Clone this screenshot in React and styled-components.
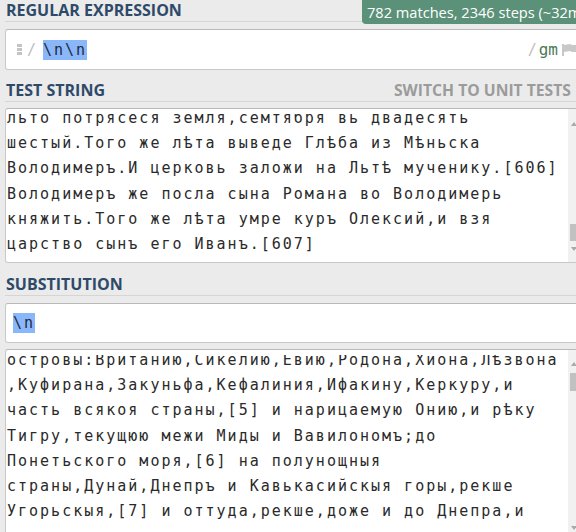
import React from "react";
import styled, { createGlobalStyle } from "styled-components";

const GlobalStyle = createGlobalStyle`
  html, body {
    margin: 0;
    padding: 0;
    background: #ebebeb;
    overflow: hidden;
  }
  body {
    width: 576px;
    height: 532px;
    font-family: "Open Sans", sans-serif;
  }
`;

const Page = styled.div`
  width: 574px;
  padding-left: 5px;
  display: flex;
  flex-direction: column;
`;

const Header = styled.div`
  display: flex;
  align-items: flex-start;
  height: 21px;
  margin-top: ${(p) => p.$gap || 0}px;
  border-bottom: 1px solid #d5d5d5;
`;

const Title = styled.h2`
  margin: 0;
  padding-left: 1px;
  font: 700 16px/21px "Open Sans", sans-serif;
  color: #2e4a69;
  white-space: nowrap;
  flex: ${(p) => (p.$basis ? `0 0 ${p.$basis}px` : "0 0 auto")};
`;

const Badge = styled.div`
  position: relative;
  z-index: 1;
  flex-shrink: 0;
  height: 24px;
  padding: 0 5px;
  background: #5a9178;
  color: #fff;
  font: 400 14.6px/24px "Open Sans", sans-serif;
  border-radius: 0 0 0 4px;
  white-space: nowrap;
`;

const SwitchLink = styled.span`
  margin-left: auto;
  padding-right: 8px;
  font: 700 15.7px/21px "Open Sans", sans-serif;
  color: #9b9b9b;
  white-space: nowrap;
`;

const Box = styled.div`
  box-sizing: border-box;
  display: flex;
  align-items: ${(p) => (p.$center ? "center" : "stretch")};
  height: ${(p) => p.$h}px;
  margin-top: ${(p) => p.$gap}px;
  padding-left: ${(p) => p.$pad || 0}px;
  background: #fff;
  border: 1px solid #c8c8c8;
  border-top-color: #b9b9b9;
  border-radius: 3px;
  overflow: hidden;
`;

const Grip = styled.svg`
  flex-shrink: 0;
  margin-right: 5px;
`;

const Delim = styled.span`
  font: 15px/20px "DejaVu Sans Mono", monospace;
  color: #bdbdbd;
  margin-right: ${(p) => p.$mr || 0}px;
`;

const Mark = styled.span`
  background: #8ab6fa;
  color: #1f2a3a;
  font: 15px/20px "DejaVu Sans Mono", monospace;
  letter-spacing: 2px;
  white-space: pre;
`;

const Flags = styled.span`
  margin-left: auto;
  display: flex;
  align-items: center;
`;

const FlagText = styled.span`
  font: 16px/20px "DejaVu Sans Mono", monospace;
  color: #4b7b57;
  margin: 0 4px 0 0;
`;

const Text = styled.div`
  flex: 1;
  align-self: stretch;
  margin-top: ${(p) => p.$clip}px;
  overflow: hidden;
  padding-left: 1px;
  font-family: "DejaVu Sans Mono", monospace;
  font-size: 15px;
  letter-spacing: 2px;
  line-height: 25.2px;
  color: #2a2a2a;
`;

const Lines = styled.div`
  margin-top: ${(p) => p.$offset}px;
`;

const Line = styled.div`
  white-space: pre;
  height: 25.2px;
`;

const Scrollbar = styled.div`
  flex-shrink: 0;
  width: 10px;
  box-sizing: border-box;
  padding: ${(p) => p.$pt}px 0 ${(p) => p.$pb}px;
  background: #f1f1f1;
  display: flex;
  flex-direction: column;
`;

const Arrow = styled.div`
  height: 15px;
  display: flex;
  align-items: center;
  justify-content: center;
  padding-left: 2px;
`;

const Track = styled.div`
  flex: 1;
  display: flex;
  flex-direction: column;
  align-items: flex-end;
`;

const Thumb = styled.div`
  width: 8px;
  height: ${(p) => p.$h}px;
  margin-top: ${(p) => p.$top}px;
  background: #c1c1c1;
`;

const ArrowIcon = ({ down }) => (
  <svg width="6" height="4" viewBox="0 0 6 4">
    <polygon points={down ? "0,0 6,0 3,4" : "0,4 6,4 3,0"} fill="#a9a9a9" />
  </svg>
);

const ScrollBar = ({ pt, pb, top, h }) => (
  <Scrollbar $pt={pt} $pb={pb}>
    <Arrow>
      <ArrowIcon />
    </Arrow>
    <Track>
      <Thumb $top={top} $h={h} />
    </Track>
    <Arrow>
      <ArrowIcon down />
    </Arrow>
  </Scrollbar>
);

const testLines = [
  "льто потрясеся земля,семтября вь двадесять",
  "шестый.Того же лѣта выведе Глѣба из Мѣньска",
  "Володимеръ.И церковь заложи на Льтѣ мученику.[606]",
  "Володимеръ же посла сына Романа во Володимерь",
  "княжить.Того же лѣта умре куръ Олексий,и взя",
  "царство сынъ его Иванъ.[607]",
];

const resultLines = [
  "островы:Вританию,Сикелию,Евию,Родона,Хиона,Лѣзвона",
  ",Куфирана,Закуньфа,Кефалиния,Ифакину,Керкуру,и",
  "часть всякоя страны,[5] и нарицаемую Онию,и рѣку",
  "Тигру,текущюю межи Миды и Вавилономъ;до",
  "Понетьского моря,[6] на полунощныя",
  "страны,Дунай,Днепръ и Кавькасийскыя горы,рекше",
  "Угорьскыя,[7] и оттуда,рекше,доже и до Днепра,и",
];

const App = () => {
  return (
    <>
      <GlobalStyle />
      <Page>
        <Header>
          <Title $basis={356}>REGULAR EXPRESSION</Title>
          <Badge>782 matches, 2346 steps (~32ms)</Badge>
        </Header>

        <Box $h={41} $gap={7} $pad={11} $center>
          <Grip width="5" height="11" viewBox="0 0 5 11">
            <rect x="0" y="0" width="5" height="3" fill="#c4c4c4" />
            <rect x="0" y="4" width="5" height="3" fill="#c4c4c4" />
            <rect x="0" y="8" width="5" height="3" fill="#c4c4c4" />
          </Grip>
          <Delim $mr={7}>/</Delim>
          <Mark>{"\\n\\n"}</Mark>
          <Flags>
            <Delim $mr={2}>/</Delim>
            <FlagText>gm</FlagText>
            <svg width="16" height="12" viewBox="0 0 16 12">
              <rect x="0" y="0" width="2" height="12" fill="#c8c8c8" />
              <polygon points="2,1 8,0 10,1 16,1 16,8 10,8 8,7 2,8" fill="#c8c8c8" />
            </svg>
          </Flags>
        </Box>

        <Header $gap={10}>
          <Title>TEST STRING</Title>
          <SwitchLink>SWITCH TO UNIT TESTS</SwitchLink>
        </Header>

        <Box $h={155} $gap={6}>
          <Text $clip={5}>
            <Lines $offset={-8}>
              {testLines.map((l, i) => (
                <Line key={i}>{l}</Line>
              ))}
            </Lines>
          </Text>
          <ScrollBar pt={7} pb={6} top={93} h={17} />
        </Box>

        <Header $gap={11}>
          <Title>SUBSTITUTION</Title>
        </Header>

        <Box $h={40} $gap={7} $pad={7} $center>
          <Mark>{"\\n"}</Mark>
        </Box>

        <Box $h={191} $gap={6}>
          <Text $clip={5}>
            <Lines $offset={-7}>
              {resultLines.map((l, i) => (
                <Line key={i}>{l}</Line>
              ))}
            </Lines>
          </Text>
          <ScrollBar pt={6} pb={4} top={2} h={18} />
        </Box>
      </Page>
    </>
  );
};

export default App;
